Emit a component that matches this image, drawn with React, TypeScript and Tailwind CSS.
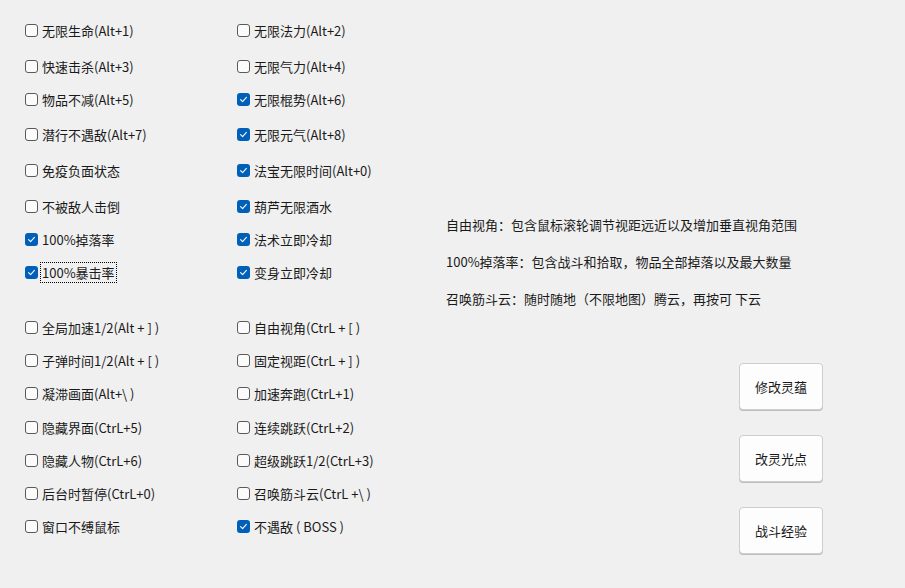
const font = { fontFamily: '"Microsoft YaHei", "Noto Sans CJK SC", "Noto Sans", sans-serif' };

type Item = { label: string; checked?: boolean; focus?: boolean };
type Row = { mt: string; left: Item; right: Item };

const rows: Row[] = [
  { mt: "mt-0", left: { label: "无限生命(Alt+1)" }, right: { label: "无限法力(Alt+2)" } },
  { mt: "mt-[16px]", left: { label: "快速击杀(Alt+3)" }, right: { label: "无限气力(Alt+4)" } },
  { mt: "mt-[13px]", left: { label: "物品不减(Alt+5)" }, right: { label: "无限棍势(Alt+6)", checked: true } },
  { mt: "mt-[15px]", left: { label: "潜行不遇敌(Alt+7)" }, right: { label: "无限元气(Alt+8)", checked: true } },
  { mt: "mt-[16px]", left: { label: "免疫负面状态" }, right: { label: "法宝无限时间(Alt+0)", checked: true } },
  { mt: "mt-[16px]", left: { label: "不被敌人击倒" }, right: { label: "葫芦无限酒水", checked: true } },
  { mt: "mt-[13px]", left: { label: "100%掉落率", checked: true }, right: { label: "法术立即冷却", checked: true } },
  { mt: "mt-[13px]", left: { label: "100%暴击率", checked: true, focus: true }, right: { label: "变身立即冷却", checked: true } },
  { mt: "mt-[35px]", left: { label: "全局加速1/2(Alt + ] )" }, right: { label: "自由视角(CtrL + [ )" } },
  { mt: "mt-[13px]", left: { label: "子弹时间1/2(Alt + [ )" }, right: { label: "固定视距(CtrL + ] )" } },
  { mt: "mt-[13px]", left: { label: "凝滞画面(Alt+\\ )" }, right: { label: "加速奔跑(CtrL+1)" } },
  { mt: "mt-[14px]", left: { label: "隐藏界面(CtrL+5)" }, right: { label: "连续跳跃(CtrL+2)" } },
  { mt: "mt-[13px]", left: { label: "隐藏人物(CtrL+6)" }, right: { label: "超级跳跃1/2(CtrL+3)" } },
  { mt: "mt-[13px]", left: { label: "后台时暂停(CtrL+0)" }, right: { label: "召唤筋斗云(CtrL +\\ )" } },
  { mt: "mt-[13px]", left: { label: "窗口不缚鼠标" }, right: { label: "不遇敌 ( BOSS )", checked: true } },
];

function Box({ checked }: { checked?: boolean }) {
  if (checked) {
    return (
      <span className="flex h-[13px] w-[13px] shrink-0 items-center justify-center rounded-[3px] bg-[#005fb8]">
        <svg width="9" height="9" viewBox="0 0 9 9" fill="none">
          <path d="M1.6 4.7 L3.6 6.6 L7.4 2.4" stroke="#fff" strokeWidth="1.1" strokeLinecap="round" strokeLinejoin="round" />
        </svg>
      </span>
    );
  }
  return <span className="block h-[13px] w-[13px] shrink-0 rounded-[3px] border border-[#5a5a5a] bg-[#fbfbfb]" />;
}

function Check({ item, w }: { item: Item; w: string }) {
  return (
    <div className={"flex items-center " + w}>
      <Box checked={item.checked} />
      <span
        className={
          item.focus
            ? "ml-[2px] whitespace-pre border border-dotted border-black px-[1px] leading-[19px]"
            : "ml-[4px] whitespace-pre leading-[19px]"
        }
      >
        {item.label}
      </span>
    </div>
  );
}

function Btn({ label }: { label: string }) {
  return (
    <button className="flex h-[47px] w-[84px] items-center justify-center rounded-[4px] border border-[#cfcfcf] bg-[#fdfdfd] text-[13px] text-[#1a1a1a] shadow-[0_1px_0_#bdbdbd]">
      {label}
    </button>
  );
}

export default function App() {
  return (
    <div className="flex h-[588px] w-[905px] overflow-hidden bg-[#f0f0f0] text-[13px] text-[#1a1a1a]" style={font}>
      <div className="flex flex-col pl-[25px] pt-[20px]">
        {rows.map((r, i) => (
          <div key={i} className={"flex h-[20px] items-center " + r.mt}>
            <Check item={r.left} w="w-[212px]" />
            <Check item={r.right} w="w-[196px]" />
          </div>
        ))}
      </div>
      <div className="flex flex-1 flex-col pl-[13px]">
        <div className="mt-[215px] flex flex-col gap-[18px] leading-[19px]">
          <p>自由视角：包含鼠标滚轮调节视距远近以及增加垂直视角范围</p>
          <p>100%掉落率：包含战斗和拾取，物品全部掉落以及最大数量</p>
          <p>召唤筋斗云：随时随地（不限地图）腾云，再按可 下云</p>
        </div>
        <div className="mt-[55px] flex flex-col items-end gap-[25px] pr-[82px]">
          <Btn label="修改灵蕴" />
          <Btn label="改灵光点" />
          <Btn label="战斗经验" />
        </div>
      </div>
    </div>
  );
}
